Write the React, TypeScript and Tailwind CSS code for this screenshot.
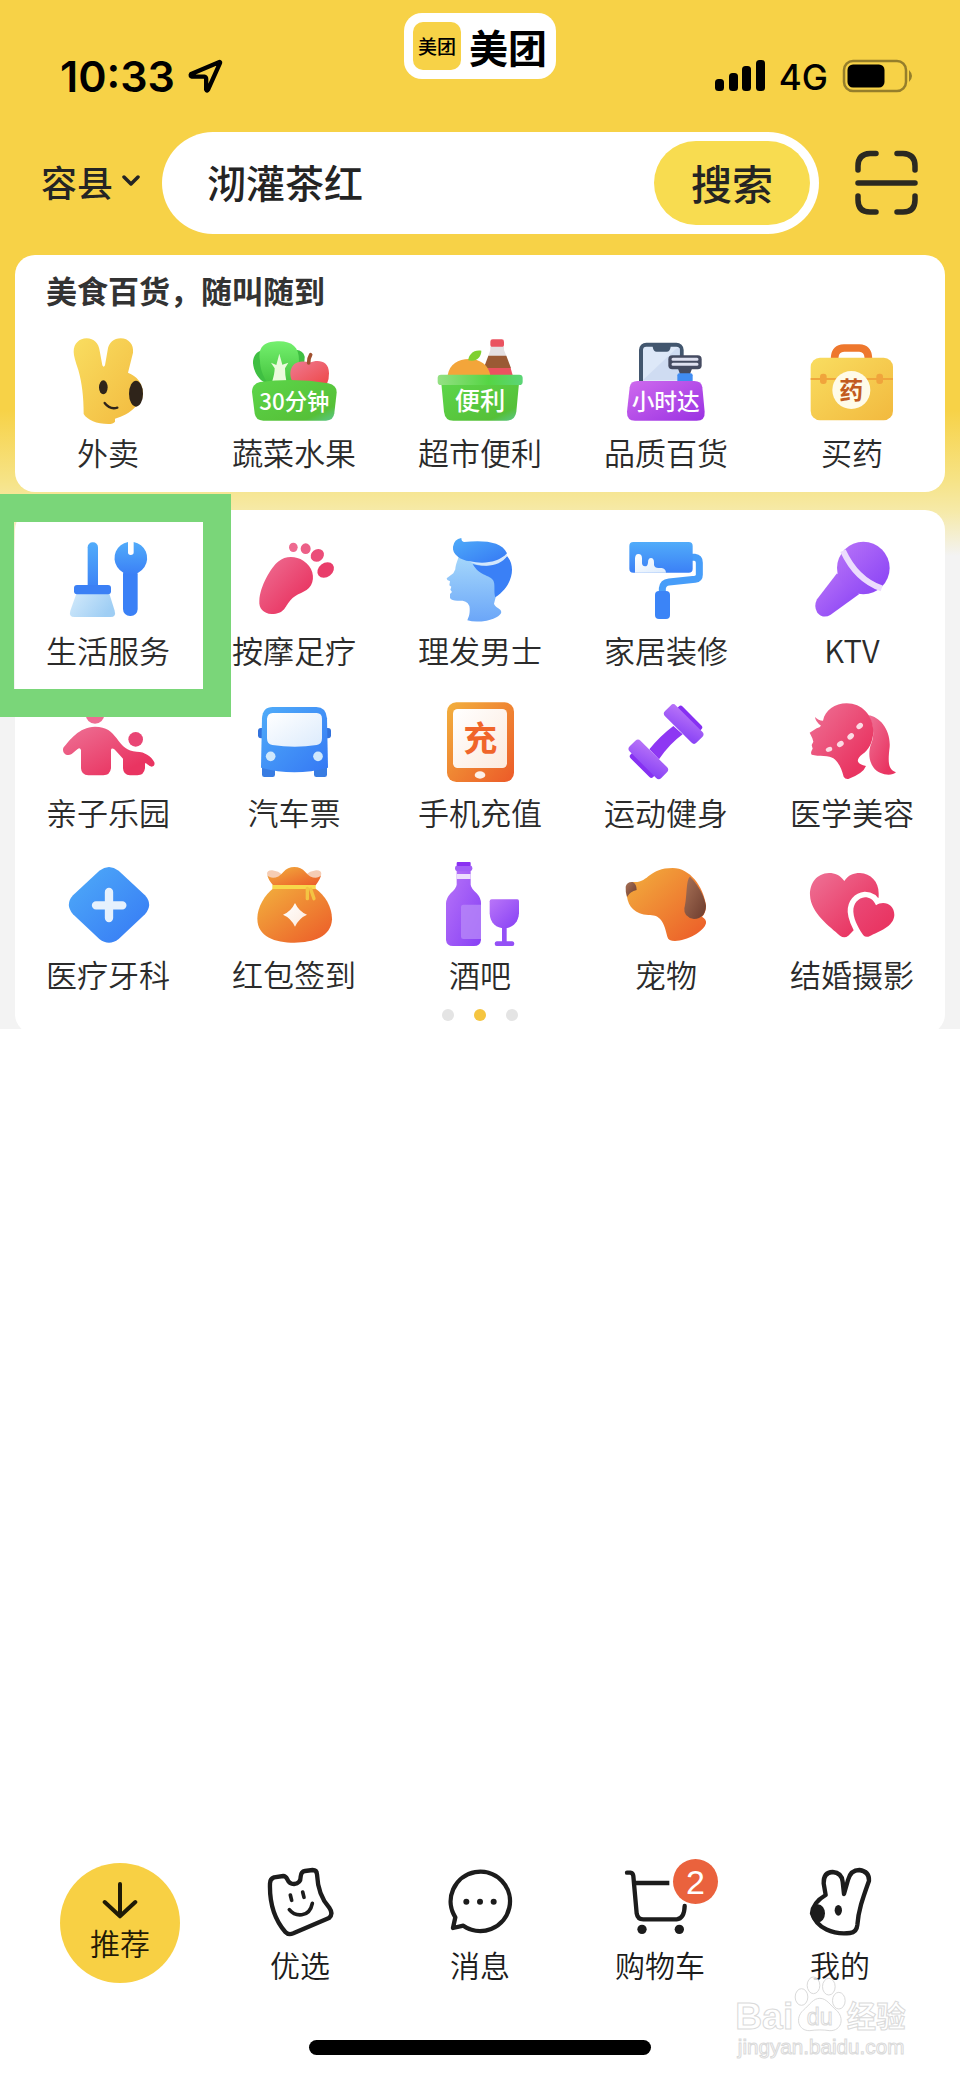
import React from "react";

const CJK = "font-['Noto_Sans_CJK_SC',sans-serif]";

function Gradients() {
  return (
    <svg className="absolute h-0 w-0" aria-hidden="true">
      <defs>
        <linearGradient id="blue" x1="0" y1="0" x2="1" y2="1">
          <stop offset="0" stopColor="#4facf9" />
          <stop offset="1" stopColor="#3578f4" />
        </linearGradient>
        <linearGradient id="blueDown" x1="0" y1="0" x2="0" y2="1">
          <stop offset="0" stopColor="#51acfa" />
          <stop offset="1" stopColor="#3b80f6" />
        </linearGradient>
        <linearGradient id="skin" x1="0" y1="0" x2="0" y2="1">
          <stop offset="0" stopColor="#a6d8fb" />
          <stop offset="1" stopColor="#6ba6f8" />
        </linearGradient>
        <linearGradient id="pale" x1="0" y1="0" x2="1" y2="0.4">
          <stop offset="0" stopColor="#d3eafb" />
          <stop offset="1" stopColor="#9fcef4" />
        </linearGradient>
        <linearGradient id="glass" x1="0" y1="0" x2="1" y2="1">
          <stop offset="0" stopColor="#ffffff" />
          <stop offset="1" stopColor="#dcebfc" />
        </linearGradient>
        <linearGradient id="pink" x1="0" y1="0" x2="1" y2="1">
          <stop offset="0" stopColor="#ee7296" />
          <stop offset="0.8" stopColor="#e93461" />
        </linearGradient>
        <linearGradient id="rose" x1="0" y1="0" x2="1" y2="1">
          <stop offset="0" stopColor="#ea4a78" />
          <stop offset="0.8" stopColor="#e93461" />
        </linearGradient>
        <linearGradient id="purple" x1="0" y1="0" x2="1" y2="1">
          <stop offset="0" stopColor="#b975f8" />
          <stop offset="1" stopColor="#8740f5" />
        </linearGradient>
        <linearGradient id="orange" x1="0" y1="0" x2="1" y2="1">
          <stop offset="0" stopColor="#f2b03e" />
          <stop offset="1" stopColor="#ec5a28" />
        </linearGradient>
        <linearGradient id="cream" x1="0" y1="0" x2="1" y2="1">
          <stop offset="0" stopColor="#ffffff" />
          <stop offset="1" stopColor="#fceade" />
        </linearGradient>
        <linearGradient id="gold" x1="0" y1="0" x2="1" y2="1">
          <stop offset="0" stopColor="#f9dd60" />
          <stop offset="1" stopColor="#f2b93e" />
        </linearGradient>
        <linearGradient id="green" x1="0" y1="0" x2="1" y2="1">
          <stop offset="0" stopColor="#5cd64a" />
          <stop offset="0.8" stopColor="#56c038" />
          <stop offset="1" stopColor="#5cc792" />
        </linearGradient>
        <linearGradient id="leaf" x1="0" y1="0" x2="0" y2="1">
          <stop offset="0" stopColor="#74f06e" />
          <stop offset="1" stopColor="#45c43f" />
        </linearGradient>
        <linearGradient id="apple" x1="0" y1="0" x2="1" y2="1">
          <stop offset="0" stopColor="#ef7b93" />
          <stop offset="1" stopColor="#ee4747" />
        </linearGradient>
        <linearGradient id="rim" x1="0" y1="0" x2="1" y2="0">
          <stop offset="0" stopColor="#94e083" />
          <stop offset="0.6" stopColor="#55d544" />
          <stop offset="1" stopColor="#5cd577" />
        </linearGradient>
        <linearGradient id="violet" x1="0" y1="0" x2="1" y2="1">
          <stop offset="0" stopColor="#cf6bee" />
          <stop offset="1" stopColor="#9a31e2" />
        </linearGradient>
        <linearGradient id="brown" x1="0" y1="0" x2="1" y2="1">
          <stop offset="0" stopColor="#a87257" />
          <stop offset="1" stopColor="#6c3b2d" />
        </linearGradient>
      </defs>
    </svg>
  );
}

function Icon({ box, children }: { box: string; children: React.ReactNode }) {
  return (
    <svg viewBox={box} className={`h-24 w-24 overflow-visible ${CJK}`} aria-hidden="true">
      {children}
    </svg>
  );
}

const TakeoutIcon = () => (
  <Icon box="180 282 288 288">
    <path fill="url(#gold)" d="M221 335C221 311 238 295 260 295C282 295 296 310 299 332L307 376Q311 384 315 376L323 330C326 308 342 295 362 295C386 295 402 314 399 338L384 398C410 408 429 430 429 460C429 478 420 492 405 502C390 518 368 530 345 536L345 545Q340 552 325 552C290 552 262 540 251 522C251 470 246 430 235 390Q221 350 221 335Z" />
    <ellipse cx="310" cy="442" rx="13" ry="21" fill="#2f241a" />
    <ellipse cx="408" cy="461" rx="21" ry="39" fill="#2f241a" />
    <path d="M314 489Q330 510 352 503" fill="none" stroke="#2f241a" strokeWidth="7" strokeLinecap="round" />
  </Icon>
);

const VegetableIcon = () => (
  <Icon box="738 282 288 288">
    <path fill="#3fbf42" d="M795 330C770 330 758 350 759 370C762 400 780 424 800 430H880C900 420 915 380 914 350C910 333 895 330 888 330Z" />
    <path fill="url(#leaf)" d="M780 362C772 315 800 304 838 304C876 304 898 322 897 362C895 390 882 410 870 428H802C788 405 780 385 780 362Z" />
    <path fill="#e9fbdc" d="M838 341L847 374L865 368L855 385Q855 405 859 423H817Q824 400 824 385L813 368L829 375Z" />
    <path fill="url(#apple)" d="M929 368C955 358 987 362 987 400Q988 415 980 434L880 427C866 412 866 370 900 365Q915 363 929 368Z" />
    <path d="M926 369C926 358 928 350 932 344" fill="none" stroke="#a0502f" strokeWidth="11" strokeLinecap="round" />
    <path fill="url(#green)" d="M780 426Q883 412 985 430Q1011 436 1010 458L1003 520Q1000 542 978 542H790Q767 542 764 520L756 455Q756 432 780 426Z" />
    <text x="883" y="511" textAnchor="middle" fontSize="67" fontWeight="500" fill="#fff">30分钟</text>
  </Icon>
);

const MarketIcon = () => (
  <Icon box="1296 282 288 288">
    <rect x="1471" y="298" width="41" height="24" rx="7" fill="#ea5360" />
    <path fill="#e4e0e2" d="M1471 320H1512V330L1519 348H1465L1471 330Z" />
    <path fill="#9a5a34" d="M1465 347H1519L1533 385H1451Z" />
    <path fill="#ea5360" d="M1451 384H1532L1538 406H1446Z" />
    <path fill="#f3a53a" d="M1343 406C1348 372 1375 357 1407 357C1440 357 1466 375 1471 406Z" />
    <path fill="#7fd02f" d="M1405 361C1405 345 1420 328 1444 332C1444 350 1430 367 1405 361Z" />
    <path fill="url(#green)" d="M1324 430H1557L1549 515Q1545 542 1520 542H1360Q1335 542 1332 515Z" />
    <rect x="1313" y="404" width="255" height="31" rx="10" fill="url(#rim)" />
    <text x="1440" y="511" textAnchor="middle" fontSize="76" fontWeight="500" fill="#fff">便利</text>
  </Icon>
);

const ExpressIcon = () => (
  <Icon box="414 282 288 288">
    <rect x="483" y="314" width="122" height="130" rx="16" fill="#dde8f8" stroke="#42566e" strokeWidth="12" />
    <path fill="#cfdcf2" d="M489 420L590 325H599V420Z" />
    <path fill="#42566e" d="M518 314H572V320Q570 335 560 335H530Q520 335 518 320Z" />
    <rect x="565" y="346" width="100" height="42" rx="12" fill="#454b61" />
    <path d="M579 358H651M579 373H651" stroke="#dfe1f0" strokeWidth="9" strokeLinecap="round" />
    <path fill="#454b61" d="M594 386H636L630 402H600Z" />
    <rect x="592" y="400" width="46" height="30" rx="6" fill="#408cf2" />
    <path fill="url(#violet)" d="M472 423H643Q664 423 667 442L674 515Q676 542 650 542H465Q440 542 441 515L449 442Q452 423 472 423Z" />
    <text x="557" y="509" textAnchor="middle" fontSize="68" fontWeight="500" fill="#fff">小时达</text>
  </Icon>
);

const MedicineIcon = () => (
  <Icon box="972 282 288 288">
    <path d="M1064 362V352Q1066 325 1092 324H1138Q1163 325 1165 352V362" fill="none" stroke="#ee772d" strokeWidth="23" />
    <rect x="992" y="353" width="247" height="188" rx="28" fill="url(#gold)" />
    <path d="M992 417H1239" stroke="#efa63b" strokeWidth="6" />
    <rect x="1020" y="401" width="20" height="31" rx="9" fill="#f0a43c" />
    <rect x="1189" y="401" width="20" height="31" rx="9" fill="#f0a43c" />
    <circle cx="1114" cy="450" r="57" fill="#fffbe8" />
    <text x="1114" y="477" textAnchor="middle" fontSize="72" fontWeight="700" fill="#c25a20">药</text>
  </Icon>
);

const HousekeepingIcon = () => (
  <Icon box="180 156 288 288">
    <path fill="url(#pale)" d="M229 341H328L344 392Q349 411 332 411H223Q206 411 211 392Z" />
    <rect x="263" y="187" width="31" height="145" rx="15" fill="url(#blueDown)" />
    <rect x="222" y="315" width="111" height="28" rx="9" fill="#3b80f5" />
    <rect x="369" y="262" width="44" height="146" rx="21" fill="#3a80f6" />
    <path fill="url(#blueDown)" d="M384 186V217Q384 225 392 225Q401 225 401 217V186A49 49 0 1 1 384 186Z" />
  </Icon>
);

const FootIcon = () => (
  <Icon box="738 156 288 288">
    <ellipse cx="880" cy="202" rx="13" ry="14" fill="#ee6a90" />
    <ellipse cx="917" cy="206" rx="15" ry="16" fill="#ec5f87" />
    <ellipse cx="952" cy="226" rx="21" ry="18" transform="rotate(-40 952 226)" fill="#eb4d79" />
    <ellipse cx="977" cy="270" rx="27" ry="21" transform="rotate(-38 977 270)" fill="#e93d6a" />
    <path fill="url(#pink)" d="M778 362C780 320 812 262 836 244C855 227 887 227 910 242C938 260 946 292 933 316C918 340 890 338 870 362C855 380 853 402 815 402C790 400 776 385 778 362Z" />
  </Icon>
);

const ManIcon = () => (
  <Icon box="1296 156 288 288">
    <path fill="url(#skin)" d="M1376 230C1370 248 1366 258 1366 268L1360 280L1340 295L1342 300L1350 304L1348 316L1354 320L1351 329L1356 336L1350 342V354Q1355 362 1372 362H1388Q1408 366 1409 385C1410 405 1405 412 1402 421Q1425 428 1460 422C1490 416 1508 402 1503 393C1500 384 1485 382 1482 371L1487 352L1500 290L1440 225Z" />
    <path fill="#3a80f6" d="M1418 252C1460 265 1500 250 1521 228C1548 258 1540 316 1486 352C1480 335 1487 312 1479 300C1465 282 1440 290 1418 252Z" />
    <path fill="#d3e7fc" d="M1400 240C1450 250 1490 250 1521 222V229C1500 258 1450 270 1400 240Z" />
    <path fill="url(#blue)" d="M1384 174Q1384 184 1392 186C1450 180 1506 184 1521 220C1495 250 1445 252 1410 244C1380 240 1356 222 1359 200Q1362 178 1384 174Z" />
  </Icon>
);

const RollerIcon = () => (
  <Icon box="414 156 288 288">
    <path d="M636 232H644Q658 234 658 248V284Q658 296 645 298L567 306Q549 308 547 325V338" fill="none" stroke="#479df9" strokeWidth="21" />
    <rect x="448" y="186" width="190" height="92" rx="12" fill="url(#blueDown)" />
    <path fill="url(#glass)" d="M465 278V235Q466 222 475 222Q486 222 486 235V250Q487 259 495 259Q503 259 504 248Q504 234 513 234Q522 234 522 248V255Q524 264 535 264H545Q557 266 558 278Z" />
    <rect x="525" y="333" width="45" height="84" rx="12" fill="#3b84f7" />
  </Icon>
);

const MicIcon = () => (
  <Icon box="972 156 288 288">
    <path fill="url(#purple)" d="M1071 280L1011 358Q1000 380 1012 398Q1030 418 1052 404L1137 343Z" />
    <circle cx="1150" cy="264" r="79" fill="url(#purple)" />
    <path d="M1089 212C1112 262 1150 306 1205 325" fill="none" stroke="#ecdcfd" strokeWidth="18" />
  </Icon>
);

const FamilyIcon = () => (
  <Icon box="180 642 288 288">
    <circle cx="285" cy="703" r="28" fill="#ee6c92" />
    <circle cx="407" cy="778" r="22" fill="#e94574" />
    <path fill="url(#pink)" d="M285 740C320 740 335 755 350 775C368 800 380 813 410 815C435 815 455 830 463 847Q466 858 455 860C445 858 440 848 435 850V865Q432 886 412 886H390Q370 885 369 865V836Q350 815 342 807Q334 803 333 810V865Q330 886 310 886H265Q244 885 243 865V810Q240 802 233 807L215 822C200 832 185 818 190 803C210 780 235 742 285 740Z" />
  </Icon>
);

const BusIcon = () => (
  <Icon box="738 642 288 288">
    <rect x="774" y="744" width="26" height="31" rx="9" fill="#3272dc" />
    <rect x="967" y="744" width="26" height="31" rx="9" fill="#3272dc" />
    <path fill="#387ce2" d="M786 850H825V884Q825 891 818 891H793Q786 891 786 884ZM942 850H981V884Q981 891 974 891H949Q942 891 942 884Z" />
    <path fill="url(#blue)" d="M786 715Q788 681 818 681H949Q978 681 981 715L984 863Q883 890 783 863Z" />
    <path fill="url(#glass)" d="M818 699H950Q966 700 966 716V775Q966 793 950 795Q885 805 817 795Q801 793 801 775V716Q803 700 818 699Z" />
    <circle cx="812" cy="829" r="14.5" fill="#cfe8fc" />
    <circle cx="954" cy="829" r="14.5" fill="#cfe8fc" />
  </Icon>
);

const RechargeIcon = () => (
  <Icon box="1296 642 288 288">
    <rect x="1341" y="667" width="201" height="239" rx="28" fill="url(#orange)" />
    <rect x="1359" y="687" width="162" height="177" rx="14" fill="url(#cream)" />
    <ellipse cx="1440" cy="885" rx="16" ry="11" fill="#fdf0e8" />
    <text x="1441" y="812" textAnchor="middle" fontSize="102" fontWeight="700" fill="#f0652a">充</text>
  </Icon>
);

const DumbbellIcon = () => (
  <Icon box="414 642 288 288">
    <path fill="#8e37f3" d="M580 738Q540 768 508 808L537 838Q568 792 608 763Z" />
    <rect x="576" y="703" width="96" height="34" rx="8" transform="rotate(45 624 720)" fill="#8630f2" />
    <rect x="444" y="834" width="96" height="34" rx="8" transform="rotate(45 492 851)" fill="#8630f2" />
    <rect x="544" y="709" width="134" height="46" rx="11" transform="rotate(45 611 732)" fill="url(#purple)" />
    <rect x="438" y="815" width="134" height="46" rx="11" transform="rotate(45 505 838)" fill="url(#purple)" />
  </Icon>
);

const BeautyIcon = () => (
  <Icon box="972 642 288 288">
    <path fill="url(#pink)" d="M1165 706C1200 710 1232 750 1229 800C1223 850 1225 868 1248 877C1235 890 1195 885 1180 862C1165 840 1166 815 1172 795C1184 770 1182 735 1165 706Z" />
    <path fill="url(#pink)" d="M1100 670C1145 670 1180 705 1180 755C1178 790 1165 810 1148 822C1125 840 1130 852 1158 858Q1150 880 1105 897Q1095 898 1091 890C1085 870 1080 850 1060 835C1050 825 1015 830 995 824Q990 818 998 806L995 795L1000 785L997 775L989 758L1010 745Q1020 742 1023 737Q1006 725 1005 711Q1015 722 1029 722C1035 690 1065 670 1100 670Z" />
    <g fill="#fbdbe4">
      <ellipse cx="1139" cy="738" rx="11" ry="8" transform="rotate(-40 1139 738)" />
      <ellipse cx="1112" cy="769" rx="11" ry="8" transform="rotate(-40 1112 769)" />
      <ellipse cx="1081" cy="792" rx="11" ry="8" transform="rotate(-35 1081 792)" />
      <ellipse cx="1047" cy="808" rx="10" ry="7" transform="rotate(-20 1047 808)" />
    </g>
  </Icon>
);

const ClinicIcon = () => (
  <Icon box="180 318 288 288">
    <path fill="url(#blue)" d="M298 362Q327 340 356 362L435 436Q460 464 435 493L356 567Q327 590 298 567L219 493Q194 464 219 436Z" />
    <path d="M327 426V504M288 466H367" stroke="#e6f1fd" strokeWidth="25" strokeLinecap="round" />
  </Icon>
);

const RedPacketIcon = () => (
  <Icon box="738 318 288 288">
    <path fill="#f6cdb4" d="M801 372Q801 360 817 361Q836 364 848 374C838 394 806 390 801 372ZM964 372Q964 360 948 361Q929 364 917 374C927 394 959 390 964 372Z" />
    <path fill="url(#orange)" d="M802 376C812 388 835 386 850 366Q863 351 883 351Q903 351 916 366C931 386 954 388 963 376Q962 386 947 406H819Q804 388 802 376Z" />
    <path fill="url(#orange)" d="M820 415H945C975 435 996 470 996 508C994 560 940 578 883 578C825 578 772 560 772 506C772 470 795 435 820 415Z" />
    <rect x="817" y="405" width="130" height="12" fill="#f8d84a" />
    <path d="M922 415V446M932 417L942 446" stroke="#f4c443" strokeWidth="10" strokeLinecap="round" />
    <path fill="url(#cream)" d="M885 459Q897 485 921 494Q897 504 885 530Q873 504 849 494Q873 485 885 459Z" />
  </Icon>
);

const WineIcon = () => (
  <Icon box="1296 318 288 288">
    <path fill="url(#purple)" d="M1370 352H1412V404Q1413 414 1430 430Q1443 444 1443 460V570Q1441 588 1422 588H1359Q1340 588 1338 570V460Q1339 444 1352 430Q1369 414 1370 404Z" />
    <rect x="1365" y="346" width="52" height="18" rx="9" fill="#a35ff7" />
    <rect x="1370" y="336" width="42" height="12" rx="3" fill="#8a30f2" />
    <rect x="1370" y="372" width="42" height="15" fill="#ecdffd" />
    <path fill="#b88af8" opacity="0.75" d="M1390 464H1443V567H1390Q1383 567 1383 560V471Q1383 464 1390 464Z" />
    <path fill="url(#purple)" d="M1475 448H1552Q1557 448 1557 454V490C1555 520 1535 535 1513 535C1490 535 1470 520 1469 490V454Q1469 448 1475 448Z" />
    <path fill="#9450f6" d="M1506 533H1520V574H1537Q1543 575 1543 581Q1543 588 1537 588H1490Q1484 588 1484 581Q1484 575 1490 574H1506Z" />
  </Icon>
);

const PetIcon = () => (
  <Icon box="414 318 288 288">
    <path fill="url(#orange)" d="M441 440Q436 400 460 396C505 400 505 354 578 354C630 354 670 410 678 465Q678 490 666 500Q680 508 678 520C672 545 620 573 585 573Q565 573 562 560C550 505 535 495 505 495C465 492 445 470 441 440Z" />
    <path fill="url(#brown)" d="M437 410Q440 395 458 396Q470 402 470 420Q450 424 441 441Q436 425 437 410Z" />
    <path fill="url(#brown)" d="M630 380C660 410 675 445 678 468Q676 505 642 507Q610 502 613 475C622 440 617 390 630 380Z" />
  </Icon>
);

const WeddingIcon = () => (
  <Icon box="972 318 288 288">
    <path fill="url(#pink)" d="M1093 393C1080 375 1065 369 1047 369C1010 370 989 400 990 435C992 490 1050 530 1080 557Q1093 567 1105 557L1190 470Q1197 445 1196 430C1196 395 1172 370 1140 369C1120 369 1105 375 1093 393Z" />
    <path fill="url(#rose)" stroke="#fff" strokeWidth="34" paintOrder="stroke" d="M1188 466C1180 448 1168 442 1155 442C1135 444 1119 460 1120 485C1122 515 1140 540 1150 556Q1158 564 1170 558C1195 545 1242 530 1243 495C1243 462 1210 450 1188 466Z" />
  </Icon>
);

type Entry = { label: string; icon: () => React.ReactNode };

const FRESH: Entry[] = [
  { label: "外卖", icon: TakeoutIcon },
  { label: "蔬菜水果", icon: VegetableIcon },
  { label: "超市便利", icon: MarketIcon },
  { label: "品质百货", icon: ExpressIcon },
  { label: "买药", icon: MedicineIcon },
];

const SERVICES: Entry[] = [
  { label: "生活服务", icon: HousekeepingIcon },
  { label: "按摩足疗", icon: FootIcon },
  { label: "理发男士", icon: ManIcon },
  { label: "家居装修", icon: RollerIcon },
  { label: "KTV", icon: MicIcon },
  { label: "亲子乐园", icon: FamilyIcon },
  { label: "汽车票", icon: BusIcon },
  { label: "手机充值", icon: RechargeIcon },
  { label: "运动健身", icon: DumbbellIcon },
  { label: "医学美容", icon: BeautyIcon },
  { label: "医疗牙科", icon: ClinicIcon },
  { label: "红包签到", icon: RedPacketIcon },
  { label: "酒吧", icon: WineIcon },
  { label: "宠物", icon: PetIcon },
  { label: "结婚摄影", icon: WeddingIcon },
];

function EntryGrid({ items }: { items: Entry[] }) {
  return (
    <div className="grid grid-cols-5 gap-y-6">
      {items.map(({ label, icon: Glyph }) => (
        <a key={label} href="#" className="flex flex-col items-center gap-[2px]">
          <Glyph />
          <span className="text-[31px] leading-10 font-[350] whitespace-nowrap text-[#2b2b2b]">{label}</span>
        </a>
      ))}
    </div>
  );
}

function StatusBar() {
  return (
    <div className="relative flex h-[132px] items-center justify-between pt-5 pr-[46px] pl-[60px] font-['Inter',sans-serif] text-black">
      <div className="flex items-center gap-3">
        <span className="text-[43px] leading-[48px] font-semibold">10:33</span>
        <svg viewBox="560 174 110 108" className="h-9 w-[37px]" aria-hidden="true">
          <path d="M657 186L572 222Q568 228 575 230H611Q617 231 617 237V269Q619 275 623 268L658 190Q660 185 657 186Z" fill="none" stroke="#000" strokeWidth="13" strokeLinejoin="round" />
        </svg>
      </div>
      <div className={`absolute top-[13px] left-1/2 flex h-[66px] -translate-x-1/2 items-center gap-2 rounded-[18px] bg-white px-[9px] pb-px ${CJK}`}>
        <span className="flex h-12 w-12 items-center justify-center rounded-[10px] bg-[#f7d247] text-[19px] leading-6 font-medium">美团</span>
        <span className="text-[39px] leading-[48px] font-bold whitespace-nowrap">美团</span>
      </div>
      <div className="flex items-center gap-[14px]">
        <svg viewBox="0 0 50 32" className="h-8 w-[50px]" aria-hidden="true">
          <rect x="0" y="19" width="9" height="12" rx="3.5" />
          <rect x="14" y="13" width="9" height="18" rx="3.5" />
          <rect x="27" y="6" width="9" height="25" rx="3.5" />
          <rect x="41" y="0" width="9" height="31" rx="3.5" />
        </svg>
        <span className="pt-[2px] text-[35px] leading-[42px] font-medium">4G</span>
        <svg viewBox="0 0 72 34" className="h-[34px] w-[72px]" aria-hidden="true">
          <rect x="2" y="2" width="62" height="30" rx="9" fill="none" stroke="#957e2b" strokeWidth="2.5" />
          <rect x="5.5" y="5.5" width="37" height="23" rx="5.5" />
          <path d="M67 11Q70 14 70 17Q70 20 67 23Z" fill="#957e2b" />
        </svg>
      </div>
    </div>
  );
}

function SearchRow() {
  return (
    <div className="flex items-center pr-[42px] text-[#242424]">
      <button type="button" className="flex w-[162px] items-center gap-[9px] pb-1 pl-[41px] text-[36px] leading-[42px] font-medium">
        <span className="whitespace-nowrap">容县</span>
        <svg viewBox="0 0 18 12" className="h-3 w-[18px] shrink-0" aria-hidden="true">
          <path d="M2 2L9 9L16 2" fill="none" stroke="#242424" strokeWidth="3.5" strokeLinecap="round" strokeLinejoin="round" />
        </svg>
      </button>
      <form className="flex h-[102px] min-w-0 flex-1 items-center rounded-full bg-white pr-[9px] pl-[45px]" onSubmit={(e) => e.preventDefault()}>
        <input type="text" aria-label="搜索" defaultValue="沏灌茶红" className="h-14 min-w-0 flex-1 bg-transparent pb-[3px] text-[39px] font-medium outline-none" />
        <button type="submit" className="h-[84px] w-[156px] shrink-0 rounded-full bg-[#f8dc50] pb-[2px] text-[41px] leading-[48px] font-medium">搜索</button>
      </form>
      <button type="button" aria-label="扫一扫" className="ml-9 shrink-0">
        <svg viewBox="0 0 63 66" className="h-[66px] w-[63px]" aria-hidden="true">
          <path d="M3 20V16Q3 4 15 3.5H21M42 3.5H48Q60 4 60 16V20M3 46V50Q3 62 15 62H21M42 62H48Q60 62 60 50V46M3 33H60" fill="none" stroke="#2b2921" strokeWidth="5.5" strokeLinecap="round" />
        </svg>
      </button>
    </div>
  );
}

function Tab({ label, box, badge, children }: { label: string; box: string; badge?: string; children: React.ReactNode }) {
  return (
    <a href="#" className="relative flex flex-col items-center gap-2 pt-[3px] text-[#1c1c1c]">
      <svg viewBox={box} className="h-[72px] w-[72px]" fill="none" stroke="#1c1c1c" strokeWidth="13" strokeLinejoin="round" strokeLinecap="round" aria-hidden="true">
        {children}
      </svg>
      <span className="text-[30px] leading-9 font-[350] whitespace-nowrap">{label}</span>
      {badge && (
        <span className="absolute -top-1 left-1/2 ml-[13px] flex h-[45px] w-[45px] items-center justify-center rounded-full bg-[#ea623d] font-['Liberation_Sans',sans-serif] text-[34px] leading-none text-white">
          {badge}
        </span>
      )}
    </a>
  );
}

function Watermark() {
  return (
    <svg viewBox="760 400 530 270" className="pointer-events-none absolute right-[50px] bottom-4 h-[90px] w-[177px]" fill="#fff" fillOpacity="0.8" stroke="#dadada" strokeWidth="3" aria-hidden="true">
      <text x="766" y="569" fontSize="112" fontWeight="700" fontFamily="Liberation Sans, sans-serif">Bai</text>
      <ellipse cx="965" cy="472" rx="19" ry="25" />
      <ellipse cx="1001" cy="437" rx="19" ry="25" />
      <ellipse cx="1047" cy="441" rx="19" ry="25" />
      <ellipse cx="1077" cy="483" rx="19" ry="25" />
      <path d="M1020 476C1040 476 1050 495 1070 512C1095 535 1085 574 1050 573C1030 570 1010 570 990 573C955 574 945 535 970 512C990 495 1000 476 1020 476Z" />
      <text x="1020" y="556" textAnchor="middle" fontSize="70" fontFamily="Liberation Sans, sans-serif">du</text>
      <text x="1101" y="562" fontSize="88" fontWeight="700" fontFamily="Noto Sans CJK SC, sans-serif">经验</text>
      <text x="774" y="644" fontSize="62" fontFamily="Liberation Sans, sans-serif">jingyan.baidu.com</text>
    </svg>
  );
}

export default function App() {
  return (
    <div className={`relative flex min-h-screen flex-col bg-white ${CJK}`}>
      <Gradients />
      <header className="overflow-hidden bg-[linear-gradient(180deg,#f7d247_0px,#f7d247_410px,#f6e386_480px,#f6eaa9_512px,#f3f3f3_556px)]">
        <StatusBar />
        <SearchRow />
        <section className="mx-[15px] mt-[21px] rounded-[20px] bg-white pt-[17px] pb-5">
          <h2 className="mb-[26px] pl-[31px] text-[31px] leading-9 font-bold text-[#333]">美食百货，随叫随到</h2>
          <EntryGrid items={FRESH} />
        </section>
        <section className="relative mx-[15px] mt-[18px] -mb-[5px] rounded-[20px] bg-white pt-[22px] pb-[13px]">
          <EntryGrid items={SERVICES} />
          <div className="mt-[15px] flex justify-center gap-5">
            <span className="h-3 w-3 rounded-full bg-[#e4e4e4]" />
            <span className="h-3 w-3 rounded-full bg-[#f5c540]" />
            <span className="h-3 w-3 rounded-full bg-[#e4e4e4]" />
          </div>
          <div className="pointer-events-none absolute -top-4 -left-[29px] h-[223px] w-[245px] border-[28px] border-[#7ad679]" />
        </section>
      </header>

      <nav className="mt-auto grid grid-cols-5 items-start px-[30px]">
        <a href="#" className="flex h-[120px] w-[120px] flex-col items-center gap-1 justify-self-center rounded-full bg-[#f8d044] pt-[18px] text-[#1f1a06]">
          <svg viewBox="306 122 108 114" className="h-[38px] w-9" fill="none" stroke="#1f1a06" strokeWidth="12" strokeLinecap="round" strokeLinejoin="round" aria-hidden="true">
            <path d="M360 131V228M314 185L360 228L406 185" />
          </svg>
          <span className="text-[30px] leading-[38px] font-[350]">推荐</span>
        </a>
        <Tab label="优选" box="792 78 216 216">
          <path d="M810 130Q810 116 822 112L850 108Q857 108 862 118Q868 132 882 132Q902 130 902 110Q903 95 915 93L938 90Q950 90 951 103C953 145 962 175 988 203Q1001 222 987 234L880 280Q865 286 856 276C825 240 808 190 810 130Z" />
          <path strokeWidth="11" d="M871 165L875 181M908 156L912 172M868 209C885 230 928 235 937 190" />
        </Tab>
        <Tab label="消息" box="1332 78 216 216">
          <path d="M1366 232A89 89 0 1 1 1390 257L1359 264Z" />
          <g fill="#1c1c1c" stroke="none">
            <circle cx="1399" cy="185" r="9" />
            <circle cx="1440" cy="185" r="9" />
            <circle cx="1481" cy="185" r="9" />
          </g>
        </Tab>
        <Tab label="购物车" box="432 78 216 216" badge="2">
          <path d="M441 98H451Q459 99 460 108L470 220Q473 238 490 238H590Q613 236 614 198" />
          <path strokeLinecap="butt" d="M464 129H568" />
          <g fill="#1c1c1c" stroke="none">
            <circle cx="486" cy="268" r="14" />
            <circle cx="598" cy="268" r="14" />
          </g>
        </Tab>
        <Tab label="我的" box="972 78 216 216">
          <path d="M1037 165L1031 130Q1030 97 1058 96Q1085 98 1088 125L1092 162L1104 120Q1112 90 1138 90Q1168 94 1167 122C1150 170 1135 210 1132 255Q1130 277 1110 279C1060 285 1010 265 996 220C998 190 1020 175 1037 165Z" />
          <ellipse cx="1014" cy="220" rx="21" ry="27" fill="#1c1c1c" stroke="none" />
          <ellipse cx="1075" cy="211" rx="11" ry="16" fill="#1c1c1c" stroke="none" />
        </Tab>
      </nav>
      <div className="mx-auto mt-[57px] mb-6 h-[15px] w-[342px] rounded-full bg-black" />
      <Watermark />
    </div>
  );
}
